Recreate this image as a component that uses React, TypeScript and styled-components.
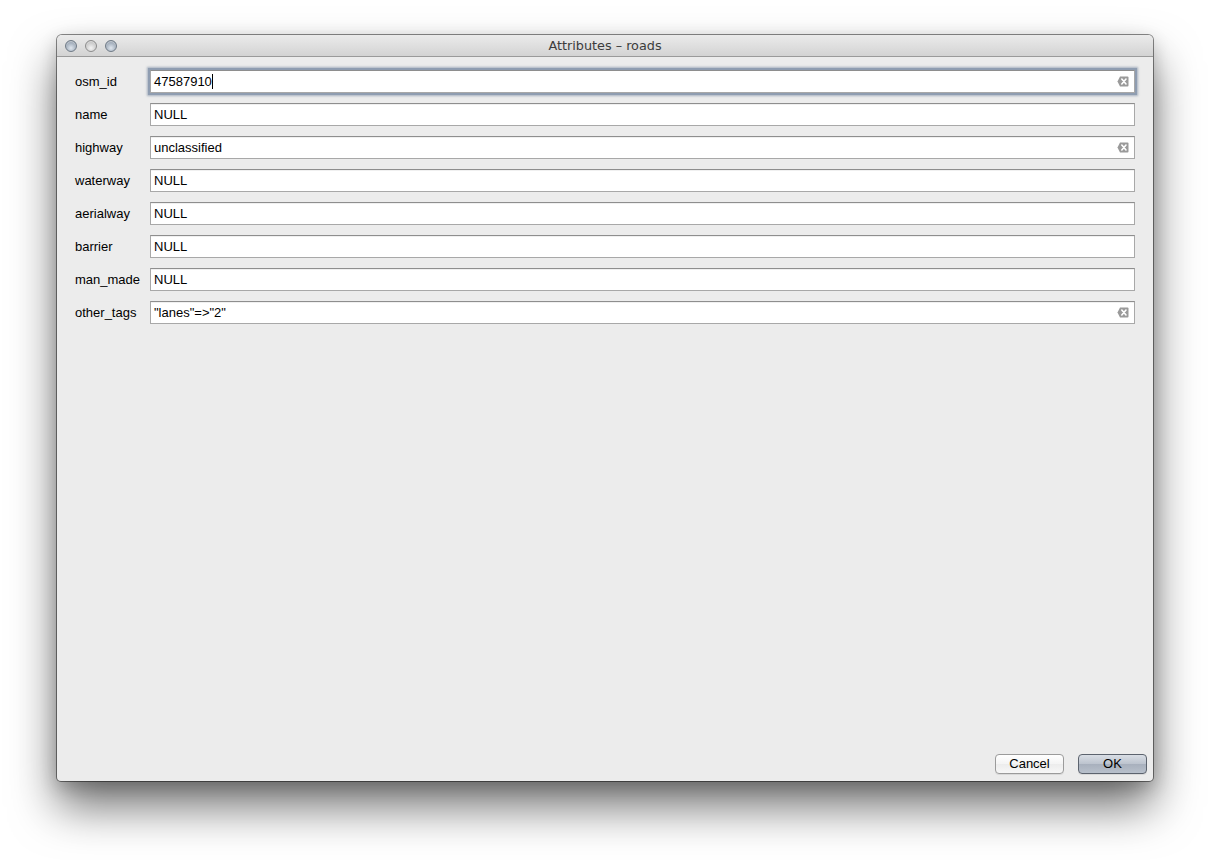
import React from "react";
import styled, { createGlobalStyle } from "styled-components";

const Global = createGlobalStyle`
  html, body { margin: 0; padding: 0; background: #ffffff; }
  body { font-family: "Liberation Sans", Arial, sans-serif; width: 1210px; height: 860px; overflow: hidden; }
`;

const Window = styled.div`
  margin: 35px 0 0 57px;
  width: 1096px;
  height: 746px;
  display: flex;
  flex-direction: column;
  border-radius: 5px 5px 4px 4px;
  background: #ececec;
  box-shadow: 0 0 0 1px rgba(0, 0, 0, 0.45), 0 26px 46px rgba(0, 0, 0, 0.55), 0 6px 18px rgba(0, 0, 0, 0.2);
  overflow: hidden;
`;

const TitleBar = styled.div`
  height: 21px;
  flex: none;
  display: flex;
  align-items: center;
  position: relative;
  background: linear-gradient(#ebebeb, #d3d3d3);
  border-bottom: 1px solid #9a9a9a;
`;

const Lights = styled.div`
  display: flex;
  gap: 8px;
  padding-left: 8px;
`;

const Light = styled.span`
  width: 12px;
  height: 12px;
  border-radius: 50%;
  box-sizing: border-box;
  border: 1px solid #6f7a86;
  background: radial-gradient(circle at 50% 70%, #dfe6ee 0%, #a9b4c1 55%, #7a8796 100%);
  box-shadow: inset 0 1px 1px rgba(255, 255, 255, 0.5);
  &:nth-child(2) {
    border-color: #8c8c8c;
    background: radial-gradient(circle at 50% 70%, #f4f4f4 0%, #cfcfcf 55%, #a8a8a8 100%);
  }
`;

const Title = styled.div`
  position: absolute;
  left: 0;
  right: 0;
  top: 3px;
  text-align: center;
  font-family: "Lucida Grande", "DejaVu Sans", sans-serif;
  font-size: 12.8px;
  color: #3c3c3c;
  pointer-events: none;
`;

const Body = styled.div`
  flex: 1;
  display: flex;
  flex-direction: column;
  padding: 13px 18px 7px 18px;
`;

const Form = styled.div`
  display: flex;
  flex-direction: column;
  gap: 10px;
  flex: 1;
`;

const Row = styled.div`
  display: flex;
  align-items: center;
  height: 23px;
`;

const Label = styled.div`
  width: 75px;
  flex: none;
  font-size: 13px;
  color: #000;
`;

const Field = styled.div<{ $focused?: boolean }>`
  flex: 1;
  height: 23px;
  box-sizing: border-box;
  display: flex;
  align-items: center;
  background: #fff;
  border: 1px solid #a8a8a8;
  border-top-color: #8e8e8e;
  padding: 0 0 0 3px;
  font-size: 13px;
  color: #000;
  position: relative;
  box-shadow: ${(p) =>
    p.$focused
      ? "0 0 0 2px #8f9db1, 0 0 2px 3px rgba(120,138,162,0.6)"
      : "inset 0 1px 0 rgba(0,0,0,0.06)"};
`;

const Value = styled.span`
  flex: 1;
  white-space: pre;
`;

const Caret = styled.span`
  display: inline-block;
  width: 1px;
  height: 15px;
  background: #000;
  vertical-align: -3px;
`;

const ClearBtn = styled.span`
  width: 12px;
  height: 11px;
  margin-right: 5px;
  display: flex;
`;

const ButtonBar = styled.div`
  display: flex;
  justify-content: flex-end;
  gap: 14px;
  margin-right: -12px;
`;

const Button = styled.button<{ $default?: boolean }>`
  width: 69px;
  height: 20px;
  box-sizing: border-box;
  border-radius: 4px;
  font-family: "Liberation Sans", Arial, sans-serif;
  font-size: 13px;
  color: #000;
  padding: 0 0 2px;
  border: 1px solid ${(p) => (p.$default ? "#5c636e" : "#9b9b9b")};
  background: ${(p) =>
    p.$default
      ? "linear-gradient(#d9dee5, #bcc3ce 50%, #a8b0bd 51%, #b8c0cb)"
      : "linear-gradient(#ffffff, #f4f4f4 50%, #ececec 51%, #f7f7f7)"};
  box-shadow: 0 1px 0 rgba(0, 0, 0, 0.08);
`;

const ClearIcon = () => (
  <svg width="12" height="11" viewBox="0 0 12 11">
    <path d="M3 0.5 H10.5 Q11.5 0.5 11.5 1.5 V9.5 Q11.5 10.5 10.5 10.5 H3 L0.5 5.5 Z" fill="#9a9a9a" />
    <path d="M4.8 3 L9 8 M9 3 L4.8 8" stroke="#fff" strokeWidth="1.6" strokeLinecap="round" />
  </svg>
);

type Attr = { name: string; value: string; clear?: boolean; focused?: boolean };

const attrs: Attr[] = [
  { name: "osm_id", value: "47587910", clear: true, focused: true },
  { name: "name", value: "NULL" },
  { name: "highway", value: "unclassified", clear: true },
  { name: "waterway", value: "NULL" },
  { name: "aerialway", value: "NULL" },
  { name: "barrier", value: "NULL" },
  { name: "man_made", value: "NULL" },
  { name: "other_tags", value: "\"lanes\"=>\"2\"", clear: true },
];

export default function App() {
  return (
    <>
      <Global />
      <Window>
        <TitleBar>
          <Lights>
            <Light />
            <Light />
            <Light />
          </Lights>
          <Title>Attributes – roads</Title>
        </TitleBar>
        <Body>
          <Form>
            {attrs.map((a) => (
              <Row key={a.name}>
                <Label>{a.name}</Label>
                <Field $focused={a.focused}>
                  <Value>
                    {a.value}
                    {a.focused && <Caret />}
                  </Value>
                  {a.clear && (
                    <ClearBtn>
                      <ClearIcon />
                    </ClearBtn>
                  )}
                </Field>
              </Row>
            ))}
          </Form>
          <ButtonBar>
            <Button>Cancel</Button>
            <Button $default>OK</Button>
          </ButtonBar>
        </Body>
      </Window>
    </>
  );
}
